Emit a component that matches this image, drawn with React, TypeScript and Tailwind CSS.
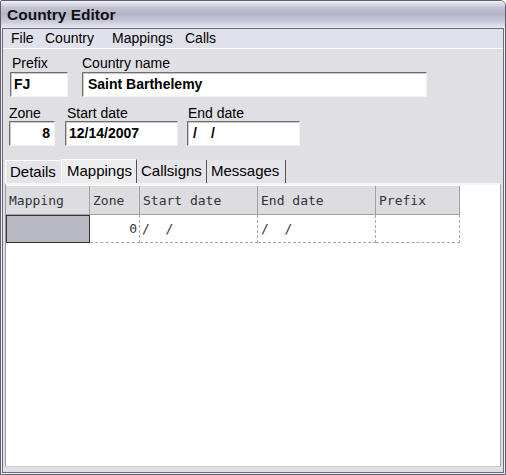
import React from 'react';

const sans = { fontFamily: '"Liberation Sans", Arial, sans-serif' };
const mono = { fontFamily: '"DejaVu Sans Mono", "Liberation Mono", monospace' };

function Field({ children, className, align = 'left' }: { children: React.ReactNode; className: string; align?: 'left' | 'right' }) {
  return (
    <div
      className={`h-[25px] bg-white border border-t-[#6f6f6f] border-l-[#6f6f6f] border-r-[#f2f2f2] border-b-[#f2f2f2] shadow-[inset_1px_1px_0_#c8c8c8] flex items-center text-[14px] font-bold text-black ${align === 'right' ? 'justify-end pr-[4px]' : 'pl-[3px]'} ${className}`}
    >
      {children}
    </div>
  );
}

const columns = [
  { name: 'Mapping', w: 'w-[84px]' },
  { name: 'Zone', w: 'w-[50px]' },
  { name: 'Start date', w: 'w-[118px]' },
  { name: 'End date', w: 'w-[118px]' },
  { name: 'Prefix', w: 'w-[84px]' },
];

export default function App() {
  return (
    <div
      className="w-[506px] h-[475px] bg-[#eeeef3] border border-[#5f5e72] rounded-tr-[6px] rounded-tl-[2px] flex flex-col overflow-hidden"
      style={sans}
    >
      {/* Title bar */}
      <div className="h-[27px] shrink-0 bg-[linear-gradient(to_bottom,#f2f2f7_0%,#c2c2d3_25%,#b5b5c9_50%,#c9c9d8_75%,#e9e9f1_100%)] flex items-center pl-[6px] pt-[1px]">
        <span className="text-[15.5px] font-bold text-[#111]">Country Editor</span>
      </div>

      {/* Window body */}
      <div className="flex-1 mx-[1px] mb-[1px] border border-[#6c6b7e] bg-[#dfdfe4] flex flex-col">
        {/* Menu */}
        <div className="h-[20px] shrink-0 bg-[#e1e1eb] border-b border-white flex items-center text-[14px] text-black">
          <span className="ml-[8px] w-[34px]">File</span>
          <span className="w-[67px]">Country</span>
          <span className="w-[73px]">Mappings</span>
          <span>Calls</span>
        </div>

        {/* Row 1 */}
        <div className="flex pt-[6px] text-[14px] text-black">
          <div className="ml-[7px] w-[58px] flex flex-col">
            <span className="h-[17px] leading-[17px] pl-[2px]">Prefix</span>
            <Field className="w-[58px]">FJ</Field>
          </div>
          <div className="ml-[14px] w-[345px] flex flex-col">
            <span className="h-[17px] leading-[17px]">Country name</span>
            <Field className="w-[345px] pl-[5px]">Saint Barthelemy</Field>
          </div>
        </div>

        {/* Row 2 */}
        <div className="flex mt-[8px] text-[14px] text-black">
          <div className="ml-[6px] w-[46px] flex flex-col">
            <span className="h-[16px] leading-[16px]">Zone</span>
            <Field className="w-[46px]" align="right">8</Field>
          </div>
          <div className="ml-[10px] w-[113px] flex flex-col">
            <span className="h-[16px] leading-[16px] pl-[2px]">Start date</span>
            <Field className="w-[113px] pl-[2px]">12/14/2007</Field>
          </div>
          <div className="ml-[9px] w-[113px] flex flex-col">
            <span className="h-[16px] leading-[16px] pl-[1px]">End date</span>
            <Field className="w-[113px] pl-[5px]">
              <span>/</span>
              <span className="ml-[14px]">/</span>
            </Field>
          </div>
        </div>

        {/* Tabs */}
        <div className="flex items-end mt-[13px] h-[24px] pl-[2px] text-[15px] text-black">
          <div className="w-[56px] h-[23px] pl-[4px] flex items-center bg-[#e4e4e9] border-t border-l border-white">Details</div>
          <div className="w-[76px] h-[24px] pl-[5px] flex items-center bg-[#eeeef1] border-t border-l border-white border-r border-r-[#555]">Mappings</div>
          <div className="w-[70px] h-[23px] pl-[4px] flex items-center bg-[#e4e4e9] border-r border-[#555]">Callsigns</div>
          <div className="w-[79px] h-[23px] pl-[4px] flex items-center bg-[#e4e4e9] border-r border-[#555]">Messages</div>
        </div>

        {/* Grid */}
        <div className="flex-1 ml-[2px] mr-[2px] mb-[5px] bg-white border-t-2 border-t-[#f6f6f8] border-l border-l-[#9a9a9a] border-r border-r-[#a8a8a8] border-b border-b-[#cfcfd4] flex flex-col" style={mono}>
          <div className="flex h-[29px] mt-[1px] text-[13px] text-[#333]">
            {columns.map((c) => (
              <div key={c.name} className={`${c.w} h-full bg-[#dcdce1] border-r border-b border-[#a0a0a5] flex items-center pl-[3px] pt-[2px]`}>
                {c.name}
              </div>
            ))}
          </div>
          <div className="flex h-[28px] text-[13px] text-[#333]">
            <div className="w-[84px] h-full bg-[#b8b9c3] border border-[#333]" />
            <div className="w-[50px] h-full border-r border-b border-dashed border-[#a8a8a8] flex items-center justify-end pr-[2px]">0</div>
            <div className="w-[118px] h-full border-r border-b border-dashed border-[#a8a8a8] flex items-center pl-[2px] whitespace-pre">/  /</div>
            <div className="w-[118px] h-full border-r border-b border-dashed border-[#a8a8a8] flex items-center pl-[3px] whitespace-pre">/  /</div>
            <div className="w-[84px] h-full border-r border-b border-dashed border-[#a8a8a8]" />
          </div>
        </div>
      </div>
    </div>
  );
}
